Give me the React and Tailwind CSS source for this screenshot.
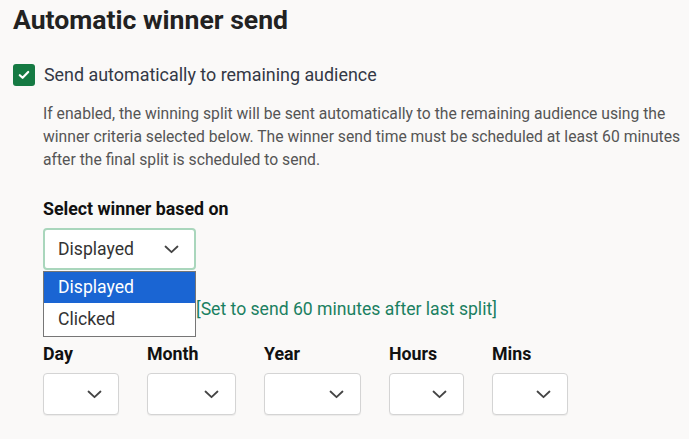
import React from "react";

const Chevron = () => (
  <svg width="15" height="9" viewBox="0 0 15 9" fill="none">
    <path d="M1.5 1.5 L7.5 7.2 L13.5 1.5" stroke="#444" strokeWidth="1.8" strokeLinecap="round" strokeLinejoin="round" />
  </svg>
);

const SmallSelect = ({ label, w }) => (
  <div className="flex flex-col">
    <div className="text-[17.8px] font-bold text-[#111] leading-[22px] h-[22px]">{label}</div>
    <div className={`mt-[8px] h-[42px] ${w} bg-white border border-[#d4d4d4] rounded-[4px] shadow-[0_1px_1px_rgba(0,0,0,0.06)] flex items-center justify-end pr-[16px]`}>
      <Chevron />
    </div>
  </div>
);

export default function App() {
  return (
    <div className="w-[689px] h-[439px] bg-[#faf9f8] overflow-hidden text-[#2a2a2a]" style={{ fontFamily: "Roboto, 'Liberation Sans', sans-serif" }}>
      <div className="pl-[13px] pt-[4px]">
        <h1 className="text-[26.6px] font-bold leading-[32px] text-[#222]">Automatic winner send</h1>
        <div className="mt-[28px] flex items-center h-[22px]">
          <div className="w-[22px] h-[22px] rounded-[3px] bg-[#157a43] flex items-center justify-center">
            <svg width="12" height="10" viewBox="0 0 12 10" fill="none">
              <path d="M1.8 5.2 L4.6 7.8 L10.2 2" stroke="white" strokeWidth="2.2" strokeLinecap="round" strokeLinejoin="round" />
            </svg>
          </div>
          <span className="ml-[9px] text-[17.9px] leading-[22px] text-[#333845]">Send automatically to remaining audience</span>
        </div>
        <p className="mt-[16px] ml-[30px] text-[15.7px] leading-[23px] text-[#555] w-[645px]">
          If enabled, the winning split will be sent automatically to the remaining audience using the winner criteria selected below. The winner send time must be scheduled at least 60 minutes after the final split is scheduled to send.
        </p>
        <div className="ml-[30px] mt-[27px]">
          <div className="text-[17.8px] font-bold leading-[22px] text-[#111]">Select winner based on</div>
          <div className="mt-[8px] h-[42px] w-[153px] bg-white rounded-[4px] border-2 border-[#a9d6bc] flex items-center justify-between pl-[13px] pr-[15px]">
            <span className="text-[17.6px] text-[#333]">Displayed</span>
            <Chevron />
          </div>
          <div className="flex mt-[1px]">
            <div className="w-[153px] border border-[#767676] bg-white">
              <div className="h-[31px] bg-[#1a65d3] text-white text-[17.6px] flex items-center pl-[14px]">Displayed</div>
              <div className="h-[33px] text-[#333] text-[17.6px] flex items-center pl-[14px]">Clicked</div>
            </div>
            <div className="pt-[27px] text-[17.6px] leading-[22px] text-[#1a8061]">[Set to send 60 minutes after last split]</div>
          </div>
          <div className="mt-[6px] flex gap-[28px]">
            <SmallSelect label="Day" w="w-[76px]" />
            <SmallSelect label="Month" w="w-[89px]" />
            <SmallSelect label="Year" w="w-[97px]" />
            <SmallSelect label="Hours" w="w-[75px]" />
            <SmallSelect label="Mins" w="w-[76px]" />
          </div>
        </div>
      </div>
    </div>
  );
}
